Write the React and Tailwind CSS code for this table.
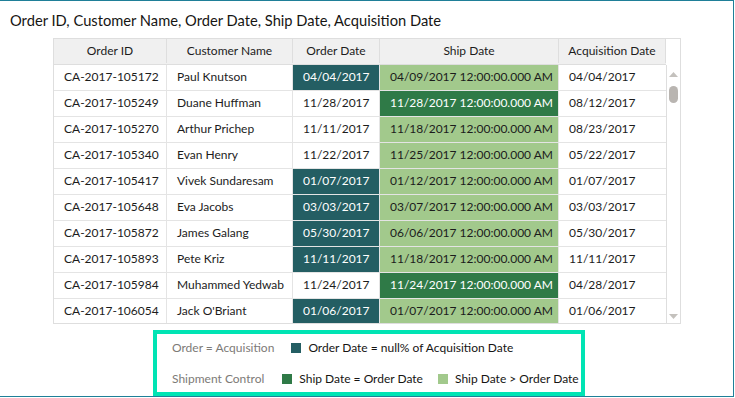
const rows = [
  ['CA-2017-105172', 'Paul Knutson', '04/04/2017', true, '04/09/2017 12:00:00.000 AM', false, '04/04/2017'],
  ['CA-2017-105249', 'Duane Huffman', '11/28/2017', false, '11/28/2017 12:00:00.000 AM', true, '08/12/2017'],
  ['CA-2017-105270', 'Arthur Prichep', '11/11/2017', false, '11/18/2017 12:00:00.000 AM', false, '08/23/2017'],
  ['CA-2017-105340', 'Evan Henry', '11/22/2017', false, '11/25/2017 12:00:00.000 AM', false, '05/22/2017'],
  ['CA-2017-105417', 'Vivek Sundaresam', '01/07/2017', true, '01/12/2017 12:00:00.000 AM', false, '01/07/2017'],
  ['CA-2017-105648', 'Eva Jacobs', '03/03/2017', true, '03/07/2017 12:00:00.000 AM', false, '03/03/2017'],
  ['CA-2017-105872', 'James Galang', '05/30/2017', true, '06/06/2017 12:00:00.000 AM', false, '05/30/2017'],
  ['CA-2017-105893', 'Pete Kriz', '11/11/2017', true, '11/18/2017 12:00:00.000 AM', false, '11/11/2017'],
  ['CA-2017-105984', 'Muhammed Yedwab', '11/24/2017', false, '11/24/2017 12:00:00.000 AM', true, '04/28/2017'],
  ['CA-2017-106054', "Jack O'Briant", '01/06/2017', true, '01/07/2017 12:00:00.000 AM', false, '01/06/2017'],
];

const cols = ['w-[113px]', 'w-[126px]', 'w-[87px]', 'w-[179px]', 'w-[107px]'];
const heads = ['Order ID', 'Customer Name', 'Order Date', 'Ship Date', 'Acquisition Date'];

export default function App() {
  return (
    <div
      className="w-[734px] h-[397px] border-t border-r border-b border-[#1f7f98] bg-white text-[#1c1c1c] overflow-hidden whitespace-nowrap"
      style={{ fontFamily: 'Lato, "Noto Sans", sans-serif' }}
    >
      {/* title */}
      <div className="pl-[10px] pt-[9px] h-[37px] text-[14.7px] leading-[20px] text-[#161513]">
        Order ID, Customer Name, Order Date, Ship Date, Acquisition Date
      </div>

      {/* table + scrollbar */}
      <div className="ml-[53px] w-[628px] flex border border-[#dedede] text-[12px]">
        <div className="flex flex-col">
          <div className="flex h-[26px] bg-[#f0f0f0] border-b border-[#dedede] pb-px">
            {heads.map((h, i) => (
              <div
                key={h}
                className={`${cols[i]} shrink-0 flex items-center justify-center border-r border-[#dedede]`}
              >
                {h}
              </div>
            ))}
          </div>
          {rows.map((r, i) => {
            const last = i === rows.length - 1;
            return (
              <div
                key={r[0]}
                className={`flex ${last ? 'h-[24px]' : 'h-[26px] border-b border-[#e4e4e4]'}`}
              >
                <div className={`${cols[0]} shrink-0 flex items-center pl-[10px] pb-px border-r border-[#e4e4e4]`}>{r[0]}</div>
                <div className={`${cols[1]} shrink-0 flex items-center pl-[10px] pb-px border-r border-[#e4e4e4]`}>{r[1]}</div>
                <div
                  className={`${cols[2]} shrink-0 flex items-center pl-[10px] pb-px border-r border-[#e4e4e4] ${
                    r[3] ? 'bg-[#245e63] text-white' : ''
                  }`}
                >
                  {r[2]}
                </div>
                <div
                  className={`${cols[3]} shrink-0 flex items-center pl-[10px] pb-px border-r border-[#e4e4e4] ${
                    r[5] ? 'bg-[#2f7a47] text-white' : 'bg-[#a2c98c]'
                  }`}
                >
                  {r[4]}
                </div>
                <div className={`${cols[4]} shrink-0 flex items-center pl-[10px] pb-px`}>{r[6]}</div>
              </div>
            );
          })}
        </div>
        <div className="flex-1 flex flex-col">
          <div className="h-[26px]" />
          <div className="flex-1 border-l border-[#dedede] flex flex-col items-center pt-[7px] pb-[4px]">
            <svg width="9" height="5" viewBox="0 0 9 5">
              <path d="M0 5 L4.5 0 L9 5 Z" fill="#c4c1bd" />
            </svg>
            <div className="mt-[9px] w-[9px] h-[17px] rounded-full bg-[#b9b5b1]" />
            <div className="flex-1" />
            <svg width="9" height="5" viewBox="0 0 9 5">
              <path d="M0 0 L9 0 L4.5 5 Z" fill="#c4c1bd" />
            </svg>
          </div>
        </div>
      </div>

      {/* legend */}
      <div className="ml-[153px] mt-[6px] w-[432px] h-[66px] border-4 border-[#00e4b4] text-[12px] pl-[15px] flex flex-col justify-center gap-[13px]">
        <div className="flex items-center h-[18px]">
          <span className="text-[#7d7a77]">Order = Acquisition</span>
          <span className="ml-[17px] shrink-0 w-[10px] h-[10px] bg-[#245e63]" />
          <span className="ml-[7px] text-[#161513]">Order Date = null% of Acquisition Date</span>
        </div>
        <div className="flex items-center h-[18px]">
          <span className="text-[#7d7a77]">Shipment Control</span>
          <span className="ml-[18px] shrink-0 w-[10px] h-[10px] bg-[#2f7a47]" />
          <span className="ml-[7px] text-[#161513]">Ship Date = Order Date</span>
          <span className="ml-[15px] shrink-0 w-[10px] h-[10px] bg-[#a2c98c]" />
          <span className="ml-[7px] text-[#161513]">Ship Date &gt; Order Date</span>
        </div>
      </div>
    </div>
  );
}
